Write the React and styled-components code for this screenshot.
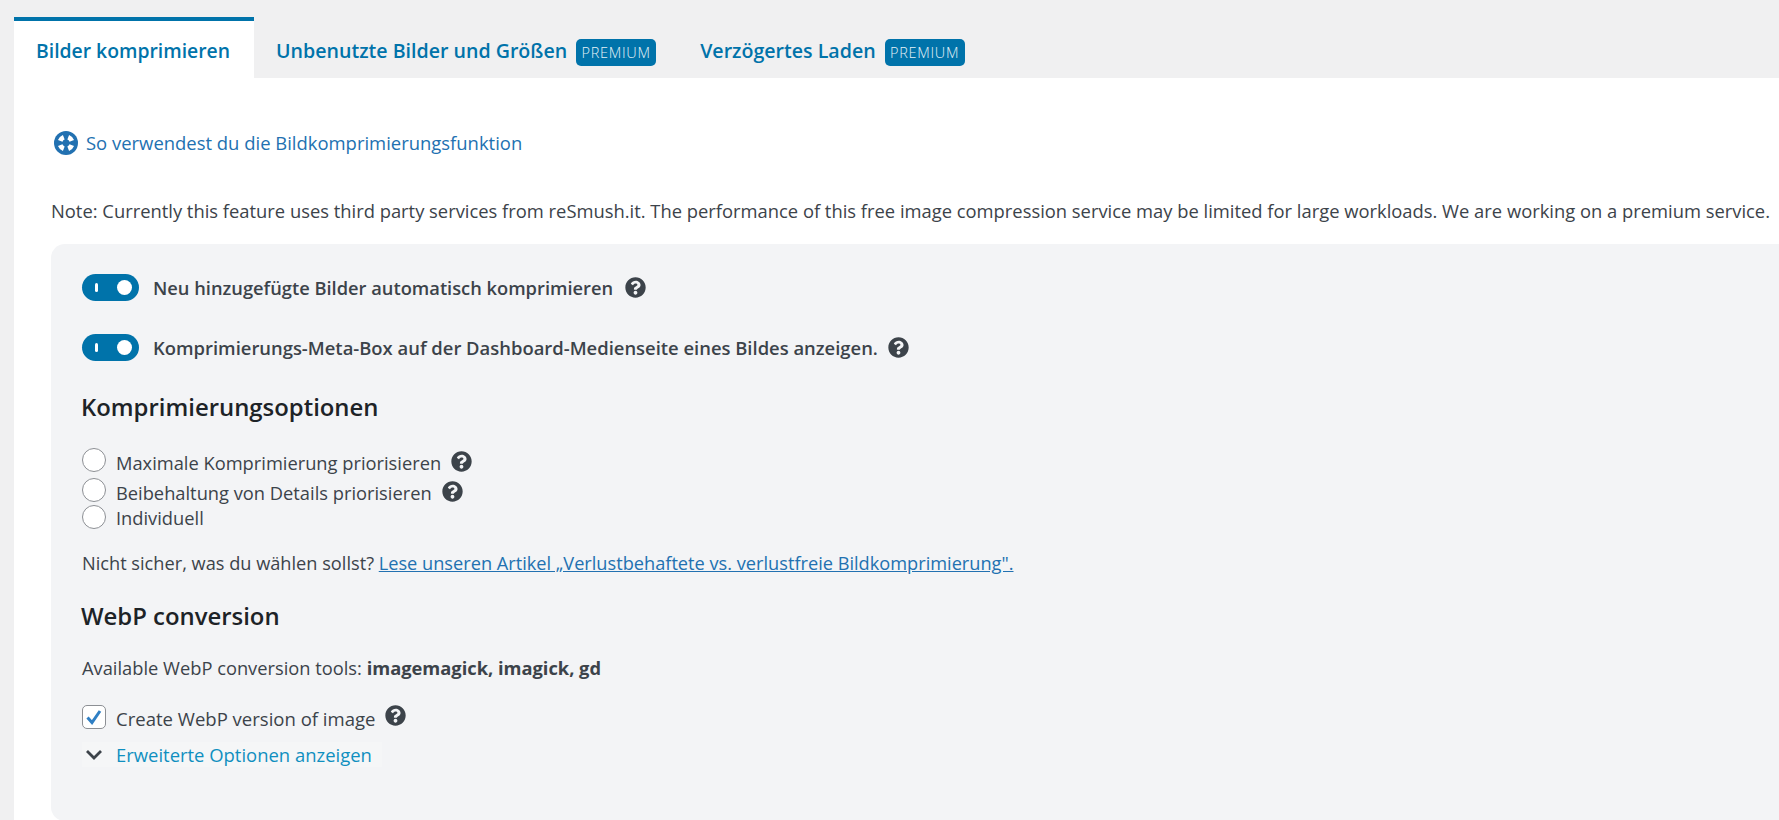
import React from "react";
import styled, { createGlobalStyle } from "styled-components";
import { FaQuestionCircle } from "react-icons/fa";

const GlobalStyle = createGlobalStyle`
  html, body {
    margin: 0;
    padding: 0;
    background: #f0f0f1;
    overflow: hidden;
  }
  body {
    font-family: "Open Sans", "Liberation Sans", sans-serif;
    font-size: 18.3px;
    color: #3c434a;
  }
`;

const Page = styled.div`
  width: 1779px;
  height: 820px;
  padding: 17px 0 0 14px;
  box-sizing: border-box;
  overflow: hidden;
`;

const TabBar = styled.div`
  display: flex;
  height: 61px;
`;

const Tab = styled.div`
  display: flex;
  align-items: center;
  gap: 9px;
  padding: 2px 22px 0;
  box-sizing: border-box;
  border-top: 4px solid ${props => (props.active ? "#0073aa" : "transparent")};
  background: ${props => (props.active ? "#fff" : "transparent")};
  color: #0073aa;
  font-size: ${props => (props.active ? 19.35 : 19.6)}px;
  font-weight: 600;
  ${props => props.active && `width: 240px;`}
`;

const Badge = styled.span`
  display: inline-flex;
  align-items: center;
  justify-content: center;
  width: 80px;
  height: 27px;
  margin-top: 4px;
  border-radius: 5px;
  background: #0073aa;
  color: #e4f1f7;
  font-size: 14.5px;
  font-weight: 300;
  letter-spacing: 0.7px;
`;

const Content = styled.div`
  height: 742px;
  background: #fff;
  padding-left: 37px;
`;

const GuideRow = styled.div`
  display: flex;
  align-items: center;
  gap: 8px;
  padding: 52px 0 0 3px;
  height: 25px;
  color: #2271b1;
  font-size: 18.45px;
`;

const Note = styled.p`
  margin: 43px 0 0;
  line-height: 26px;
  white-space: nowrap;
  font-size: 18.38px;
`;

const Panel = styled.div`
  margin-top: 20px;
  height: 577px;
  padding: 30px 0 0 31px;
  box-sizing: border-box;
  background: #f3f4f6;
  border-radius: 14px 0 0 14px;
`;

const ToggleRow = styled.div`
  display: flex;
  align-items: center;
  height: 27px;
  margin-bottom: ${props => props.gap}px;
  font-size: ${props => props.size}px;
  font-weight: 600;
  gap: 14px;
`;

const Toggle = styled.span`
  display: flex;
  align-items: center;
  justify-content: space-between;
  width: 57px;
  height: 27px;
  padding: 0 7px 0 13px;
  box-sizing: border-box;
  border-radius: 14px;
  background: #0073aa;
  flex: none;
`;

const ToggleTick = styled.span`
  width: 3px;
  height: 9px;
  border-radius: 2px;
  background: #fff;
`;

const ToggleKnob = styled.span`
  width: 15px;
  height: 15px;
  border-radius: 50%;
  background: #fff;
`;

const Heading = styled.h2`
  margin: ${props => props.top}px 0 ${props => props.bottom}px -1px;
  font-size: 23.9px;
  line-height: 30px;
  font-weight: 600;
  color: #1d2327;
`;

const OptionRow = styled.div`
  display: flex;
  align-items: center;
  gap: 10px;
  height: ${props => props.height}px;
  margin-top: ${props => props.top || 0}px;
  font-size: ${props => props.size || 18.3}px;
`;

const Radio = styled.span`
  width: 24px;
  height: 24px;
  box-sizing: border-box;
  border: 1px solid #8c8f94;
  border-radius: 50%;
  background: #fff;
  flex: none;
  margin-top: ${props => props.shift}px;
`;

const OptionText = styled.span`
  margin-top: ${props => props.shift}px;
`;

const HelpIcon = styled(FaQuestionCircle)`
  width: 21px;
  height: 21px;
  color: #3c434a;
  flex: none;
  margin-left: ${props => props.offset || 0}px;
  margin-top: ${props => props.shift || 0}px;
`;

const Paragraph = styled.p`
  margin: ${props => props.top}px 0 0;
  line-height: 26px;
  font-size: ${props => props.size}px;
`;

const ArticleLink = styled.a`
  color: #2271b1;
  text-decoration: underline;
`;

const Checkbox = styled.span`
  display: flex;
  align-items: center;
  justify-content: center;
  width: 24px;
  height: 24px;
  box-sizing: border-box;
  border: 1px solid #8c8f94;
  border-radius: 5px;
  background: #fff;
  flex: none;
`;

const AdvancedRow = styled.div`
  display: flex;
  align-items: center;
  gap: 10px;
  width: 300px;
  height: 25px;
  margin-top: 10px;
  color: #0f8fc0;
  font-size: 18.45px;
  background: #f5f6f7;
`;

const ChevronBox = styled.span`
  display: flex;
  justify-content: center;
  width: 24px;
  flex: none;
`;

const options = [
  { label: "Maximale Komprimierung priorisieren", height: 30, radio: -4, text: 0, help: true },
  { label: "Beibehaltung von Details priorisieren", height: 30, radio: -4, text: 0, help: true },
  { label: "Individuell", height: 24, radio: -5, text: -3 }
];

// one white patch of the help ring, between two radii around the middle
const ringPatch = angle => {
  const point = (r, a) => {
    const rad = (a * Math.PI) / 180;
    return `${(12 + r * Math.cos(rad)).toFixed(2)} ${(12 + r * Math.sin(rad)).toFixed(2)}`;
  };
  return `M${point(3.8, angle - 24)} L${point(8.6, angle - 24)} A8.6 8.6 0 0 1 ${point(8.6, angle + 24)} L${point(3.8, angle + 24)} A3.8 3.8 0 0 0 ${point(3.8, angle - 24)} Z`;
};

const SosIcon = () => (
  <svg width="24" height="24" viewBox="0 0 24 24">
    <circle cx="12" cy="12" r="12" fill="#2271b1" />
    {[45, 135, 225, 315].map(angle => (
      <path key={angle} d={ringPatch(angle)} fill="#fff" />
    ))}
  </svg>
);

const App = () => (
  <Page>
    <GlobalStyle />
    <TabBar>
      <Tab active>Bilder komprimieren</Tab>
      <Tab>
        Unbenutzte Bilder und Größen <Badge>PREMIUM</Badge>
      </Tab>
      <Tab>
        Verzögertes Laden <Badge>PREMIUM</Badge>
      </Tab>
    </TabBar>
    <Content>
      <GuideRow>
        <SosIcon />
        So verwendest du die Bildkomprimierungsfunktion
      </GuideRow>
      <Note>
        Note: Currently this feature uses third party services from reSmush.it. The performance of this free
        image compression service may be limited for large workloads. We are working on a premium service.
      </Note>
      <Panel>
        <ToggleRow gap={33} size={18.3}>
          <Toggle>
            <ToggleTick />
            <ToggleKnob />
          </Toggle>
          Neu hinzugefügte Bilder automatisch komprimieren
          <HelpIcon offset={-2} />
        </ToggleRow>
        <ToggleRow gap={0} size={18.42}>
          <Toggle>
            <ToggleTick />
            <ToggleKnob />
          </Toggle>
          Komprimierungs-Meta-Box auf der Dashboard-Medienseite eines Bildes anzeigen.
          <HelpIcon offset={-4} />
        </ToggleRow>
        <Heading top={31} bottom={25}>
          Komprimierungsoptionen
        </Heading>
        {options.map(option => (
          <OptionRow key={option.label} height={option.height}>
            <Radio shift={option.radio} />
            <OptionText shift={option.text}>{option.label}</OptionText>
            {option.help && <HelpIcon shift={-2} />}
          </OptionRow>
        ))}
        <Paragraph top={19} size={18.2}>
          Nicht sicher, was du wählen sollst?{" "}
          <ArticleLink>Lese unseren Artikel „Verlustbehaftete vs. verlustfreie Bildkomprimierung".</ArticleLink>
        </Paragraph>
        <Heading top={25} bottom={24}>
          WebP conversion
        </Heading>
        <Paragraph top={0} size={18.3}>
          Available WebP conversion tools: <b>imagemagick, imagick, gd</b>
        </Paragraph>
        <OptionRow height={30} top={21} size={18.55}>
          <Checkbox>
            <svg width="18" height="18" viewBox="0 0 18 18">
              <path d="M2.5 9.5 L7 14.5 L15 3" fill="none" stroke="#2f7fc4" strokeWidth="3" />
            </svg>
          </Checkbox>
          <OptionText shift={2}>Create WebP version of image</OptionText>
          <HelpIcon shift={-4} />
        </OptionRow>
        <AdvancedRow>
          <ChevronBox>
            <svg width="18" height="11" viewBox="0 0 18 11">
              <path d="M2 2 L9 9 L16 2" fill="none" stroke="#3c434a" strokeWidth="2.8" />
            </svg>
          </ChevronBox>
          Erweiterte Optionen anzeigen
        </AdvancedRow>
      </Panel>
    </Content>
  </Page>
);

export default App;
